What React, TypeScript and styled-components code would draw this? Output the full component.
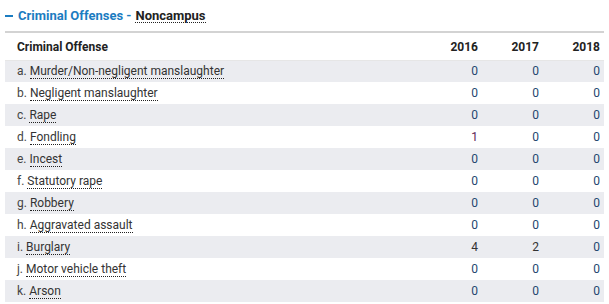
import styled, { createGlobalStyle } from 'styled-components'

const GlobalStyle = createGlobalStyle`
  body {
    margin: 0;
    background: #fff;
    font-family: Roboto, "Liberation Sans", sans-serif;
  }
`

const Panel = styled.section`
  padding: 0 5px;
  width: 599px;
`

const Title = styled.h3`
  margin: 0;
  height: 33px;
  display: flex;
  align-items: center;
  gap: 4px;
  font-size: 13px;
  font-weight: 700;
  color: #1b7cc1;
  border-bottom: 2px solid #d3d3d3;
  padding: 1px 0 1px;
  box-sizing: border-box;
`

const Toggle = styled.span`
  width: 8px;
  height: 2px;
  background: #1b7cc1;
  margin-right: 1px;
`

const Place = styled.span`
  color: #222;
  border-bottom: 1px dotted #222;
  line-height: 13px;
`

const Table = styled.table`
  width: 100%;
  border-collapse: collapse;
  font-size: 12px;
  color: #444;
`

const HeadCell = styled.th<{ $num?: boolean }>`
  text-align: ${p => (p.$num ? 'right' : 'left')};
  font-weight: 700;
  color: #222;
  height: 27px;
  padding: 2px ${p => (p.$num ? '4px' : '0')} 0 ${p => (p.$num ? '0' : '12px')};
  border-bottom: 1px solid #e6e6e6;
  width: ${p => (p.$num ? '61px' : 'auto')};
  box-sizing: border-box;
`

const Row = styled.tr<{ $shaded: boolean }>`
  height: 22px;
  background: ${p => (p.$shaded ? '#ebecf0' : '#fff')};
`

const Label = styled.td`
  padding-left: 12px;
  color: #444;
`

const Term = styled.span`
  color: #333;
  border-bottom: 1px dotted #222;
`

const Num = styled.td<{ $tone: string }>`
  text-align: right;
  padding-right: 4px;
  color: ${p => p.$tone};
`

const rows: [string, string, number[]][] = [
  ['a.', 'Murder/Non-negligent manslaughter', [0, 0, 0]],
  ['b.', 'Negligent manslaughter', [0, 0, 0]],
  ['c.', 'Rape', [0, 0, 0]],
  ['d.', 'Fondling', [1, 0, 0]],
  ['e.', 'Incest', [0, 0, 0]],
  ['f.', 'Statutory rape', [0, 0, 0]],
  ['g.', 'Robbery', [0, 0, 0]],
  ['h.', 'Aggravated assault', [0, 0, 0]],
  ['i.', 'Burglary', [4, 2, 0]],
  ['j.', 'Motor vehicle theft', [0, 0, 0]],
  ['k.', 'Arson', [0, 0, 0]],
]

const toneFor = (v: number) => (v === 0 ? '#24476f' : v === 1 ? '#5e1f55' : '#333')

export default function App() {
  return (
    <>
      <GlobalStyle />
      <Panel>
        <Title>
          <Toggle />
          <span>Criminal Offenses -</span>
          <Place>Noncampus</Place>
        </Title>
        <Table>
          <thead>
            <tr>
              <HeadCell>Criminal Offense</HeadCell>
              <HeadCell $num>2016</HeadCell>
              <HeadCell $num>2017</HeadCell>
              <HeadCell $num>2018</HeadCell>
            </tr>
          </thead>
          <tbody>
            {rows.map(([letter, name, vals], i) => (
              <Row key={letter} $shaded={i % 2 === 0}>
                <Label>
                  {letter} <Term>{name}</Term>
                </Label>
                {vals.map((v, j) => (
                  <Num key={j} $tone={toneFor(v)}>{v}</Num>
                ))}
              </Row>
            ))}
          </tbody>
        </Table>
      </Panel>
    </>
  )
}
